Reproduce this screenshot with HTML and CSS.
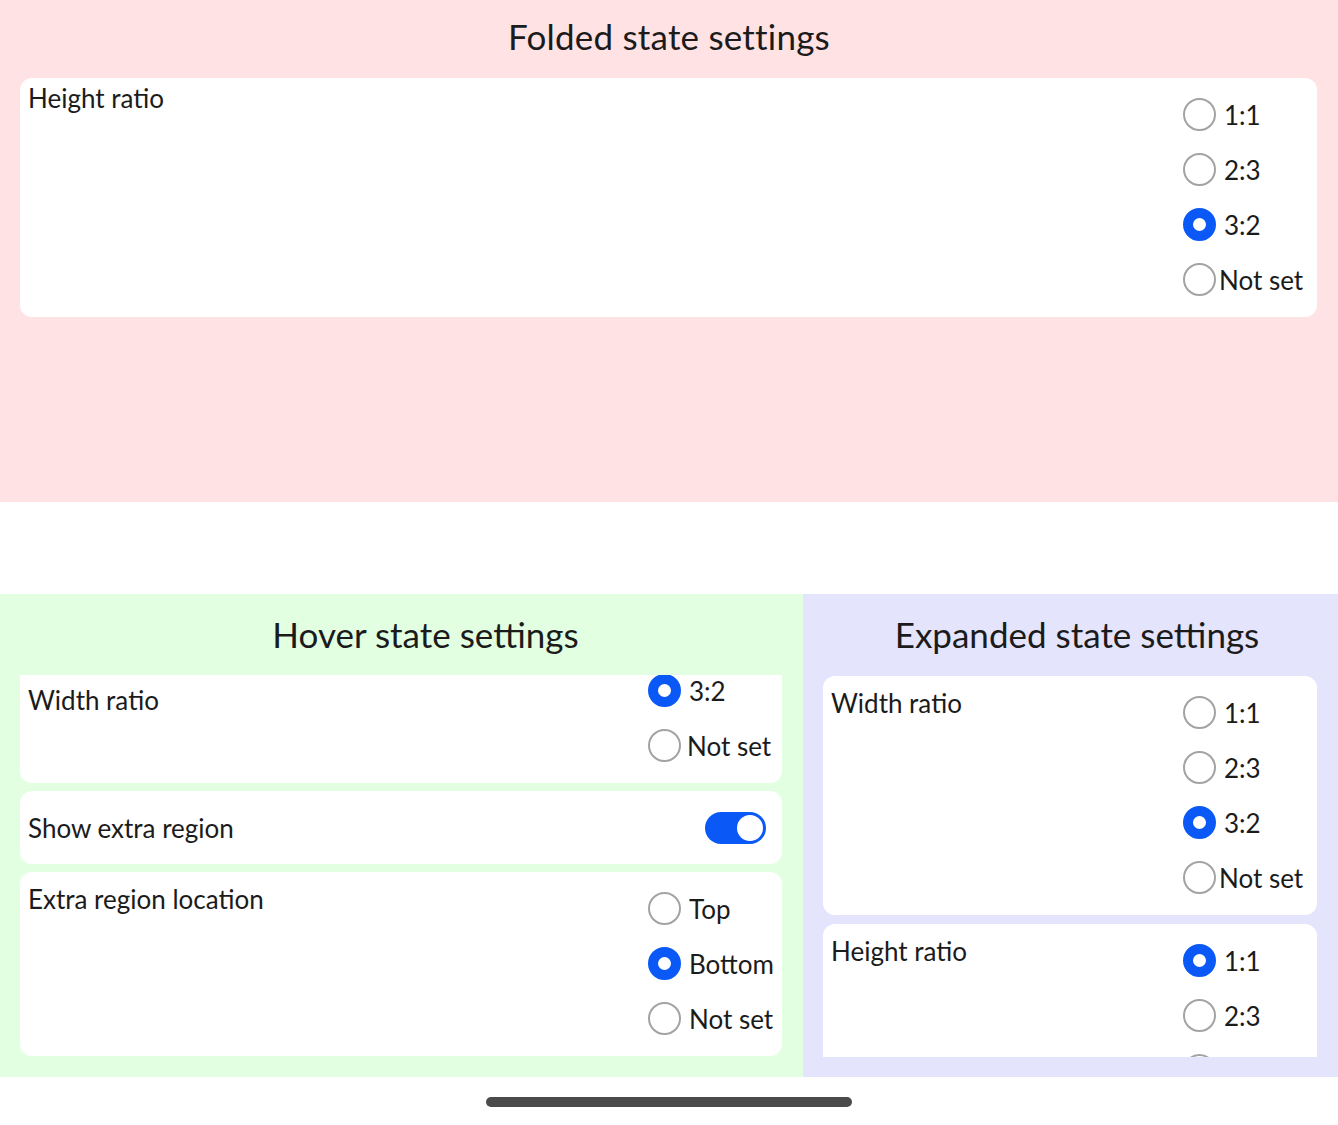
FILE: index.html
```html
<!DOCTYPE html>
<html lang="en">
<head>
<meta charset="utf-8">
<title>State settings</title>
<link rel="stylesheet" href="styles.css">
</head>
<body>
<div class="screen">
  <section class="panel panel-folded">
    <h2 class="panel-title">Folded state settings</h2>
    <div class="card card-tall">
      <div class="card-label card-label-high">Height ratio</div>
      <div class="radio-group">
        <div class="radio"><span class="radio-dot"></span><span class="radio-text">1:1</span></div>
        <div class="radio"><span class="radio-dot"></span><span class="radio-text">2:3</span></div>
        <div class="radio"><span class="radio-dot is-checked"></span><span class="radio-text">3:2</span></div>
        <div class="radio"><span class="radio-dot"></span><span class="radio-text radio-text-tight">Not set</span></div>
      </div>
    </div>
  </section>

  <div class="spacer"></div>

  <div class="bottom-row">
    <section class="panel panel-hover">
      <h2 class="panel-title panel-title-sub panel-title-hover">Hover state settings</h2>
      <div class="list">
        <div class="card card-clipped">
          <div class="card-label">Width ratio</div>
          <div class="radio-group radio-group-bottom">
            <div class="radio"><span class="radio-dot"></span><span class="radio-text">1:1</span></div>
            <div class="radio"><span class="radio-dot"></span><span class="radio-text">2:3</span></div>
            <div class="radio"><span class="radio-dot is-checked"></span><span class="radio-text">3:2</span></div>
            <div class="radio"><span class="radio-dot"></span><span class="radio-text radio-text-mid">Not set</span></div>
          </div>
        </div>
        <div class="card card-switch">
          <div class="card-label card-label-center">Show extra region</div>
          <div class="switch is-on"><span class="switch-knob"></span></div>
        </div>
        <div class="card">
          <div class="card-label">Extra region location</div>
          <div class="radio-group">
            <div class="radio"><span class="radio-dot"></span><span class="radio-text">Top</span></div>
            <div class="radio"><span class="radio-dot is-checked"></span><span class="radio-text">Bottom</span></div>
            <div class="radio"><span class="radio-dot"></span><span class="radio-text">Not set</span></div>
          </div>
        </div>
      </div>
    </section>

    <section class="panel panel-expanded">
      <h2 class="panel-title panel-title-sub panel-title-expanded">Expanded state settings</h2>
      <div class="list list-offset">
        <div class="card">
          <div class="card-label">Width ratio</div>
          <div class="radio-group">
            <div class="radio"><span class="radio-dot"></span><span class="radio-text">1:1</span></div>
            <div class="radio"><span class="radio-dot"></span><span class="radio-text">2:3</span></div>
            <div class="radio"><span class="radio-dot is-checked"></span><span class="radio-text">3:2</span></div>
            <div class="radio"><span class="radio-dot"></span><span class="radio-text radio-text-tight">Not set</span></div>
          </div>
        </div>
        <div class="card card-cut">
          <div class="card-label">Height ratio</div>
          <div class="radio-group">
            <div class="radio"><span class="radio-dot is-checked"></span><span class="radio-text">1:1</span></div>
            <div class="radio"><span class="radio-dot"></span><span class="radio-text">2:3</span></div>
            <div class="radio"><span class="radio-dot"></span><span class="radio-text">3:2</span></div>
            <div class="radio"><span class="radio-dot"></span><span class="radio-text radio-text-tight">Not set</span></div>
          </div>
        </div>
      </div>
    </section>
  </div>

  <div class="home-area"><div class="home-bar"></div></div>
</div>
</body>
</html>
```

FILE: styles.css
```css
* { box-sizing: border-box; }

html, body {
  margin: 0;
  padding: 0;
  background: #ffffff;
}

body {
  font-family: Lato, "Open Sans", "Liberation Sans", sans-serif;
  color: #1b1b1b;
}

.screen {
  width: 1338px;
  height: 1125px;
  display: flex;
  flex-direction: column;
  overflow: hidden;
}

.panel {
  display: flex;
  flex-direction: column;
}

.panel-folded {
  height: 502px;
  background: #ffe2e4;
}

.panel-title {
  margin: 0 0 6px;
  height: 72px;
  line-height: 72px;
  text-align: center;
  font-size: 35px;
  font-weight: 400;
  letter-spacing: 0.2px;
  color: #1b1b1b;
}

.panel-title-sub {
  height: 81px;
  line-height: 81px;
  margin: 0;
  letter-spacing: 0;
}

.panel-title-hover {
  padding-left: 48px;
}

.panel-title-expanded {
  padding-left: 13px;
}

.spacer {
  height: 92px;
  flex: none;
}

.bottom-row {
  display: flex;
  height: 483px;
  flex: none;
}

.panel-hover {
  width: 803px;
  background: #e2ffe2;
}

.panel-expanded {
  flex: 1;
  background: #e4e4fc;
}

.list {
  height: 382px;
  overflow: hidden;
  display: flex;
  flex-direction: column;
  gap: 8px;
}

.list-offset {
  padding-top: 1px;
  gap: 9px;
}

.card {
  margin: 0 21px 0 20px;
  background: #ffffff;
  border-radius: 12px;
  display: flex;
  justify-content: space-between;
  align-items: flex-start;
  flex: none;
}

.card-tall {
  height: 239px;
}

.card-clipped {
  height: 108px;
  overflow: hidden;
  border-radius: 0 0 12px 12px;
  align-items: flex-end;
}

.card-clipped .card-label {
  align-self: flex-start;
  padding-top: 9px;
}

.card-switch {
  height: 73px;
  align-items: center;
  padding-right: 16px;
}

.card-cut {
  border-radius: 12px 12px 0 0;
}

.card-label {
  padding: 11px 0 0 8px;
  font-size: 26px;
  line-height: 32px;
}

.card-label-high {
  padding-top: 4px;
}

.card-label.card-label-center {
  padding-top: 0;
}

.radio-group {
  width: 134px;
  padding: 9px 0 10px;
  display: flex;
  flex-direction: column;
  flex: none;
}

.radio {
  height: 55px;
  display: flex;
  align-items: center;
}

.radio-dot {
  width: 33px;
  height: 33px;
  border-radius: 50%;
  border: 2px solid #a3a3a3;
  background: #ffffff;
  flex: none;
}

.radio-dot.is-checked {
  border: 10px solid #0a59f7;
}

.radio-text {
  margin-left: 8px;
  font-size: 26px;
  line-height: 32px;
  white-space: nowrap;
  color: #1b1b1b;
}

.radio-text-tight { margin-left: 3px; }
.radio-text-mid { margin-left: 6px; }

.switch {
  width: 61px;
  height: 32px;
  border-radius: 16px;
  background: #0a59f7;
  display: flex;
  align-items: center;
  justify-content: flex-end;
  padding-right: 3px;
}

.switch-knob {
  width: 26px;
  height: 26px;
  border-radius: 50%;
  background: #ffffff;
}

.home-area {
  flex: 1;
  display: flex;
  justify-content: center;
  padding-top: 20px;
}

.home-bar {
  width: 366px;
  height: 10px;
  border-radius: 5px;
  background: #4b4b4b;
}
```
